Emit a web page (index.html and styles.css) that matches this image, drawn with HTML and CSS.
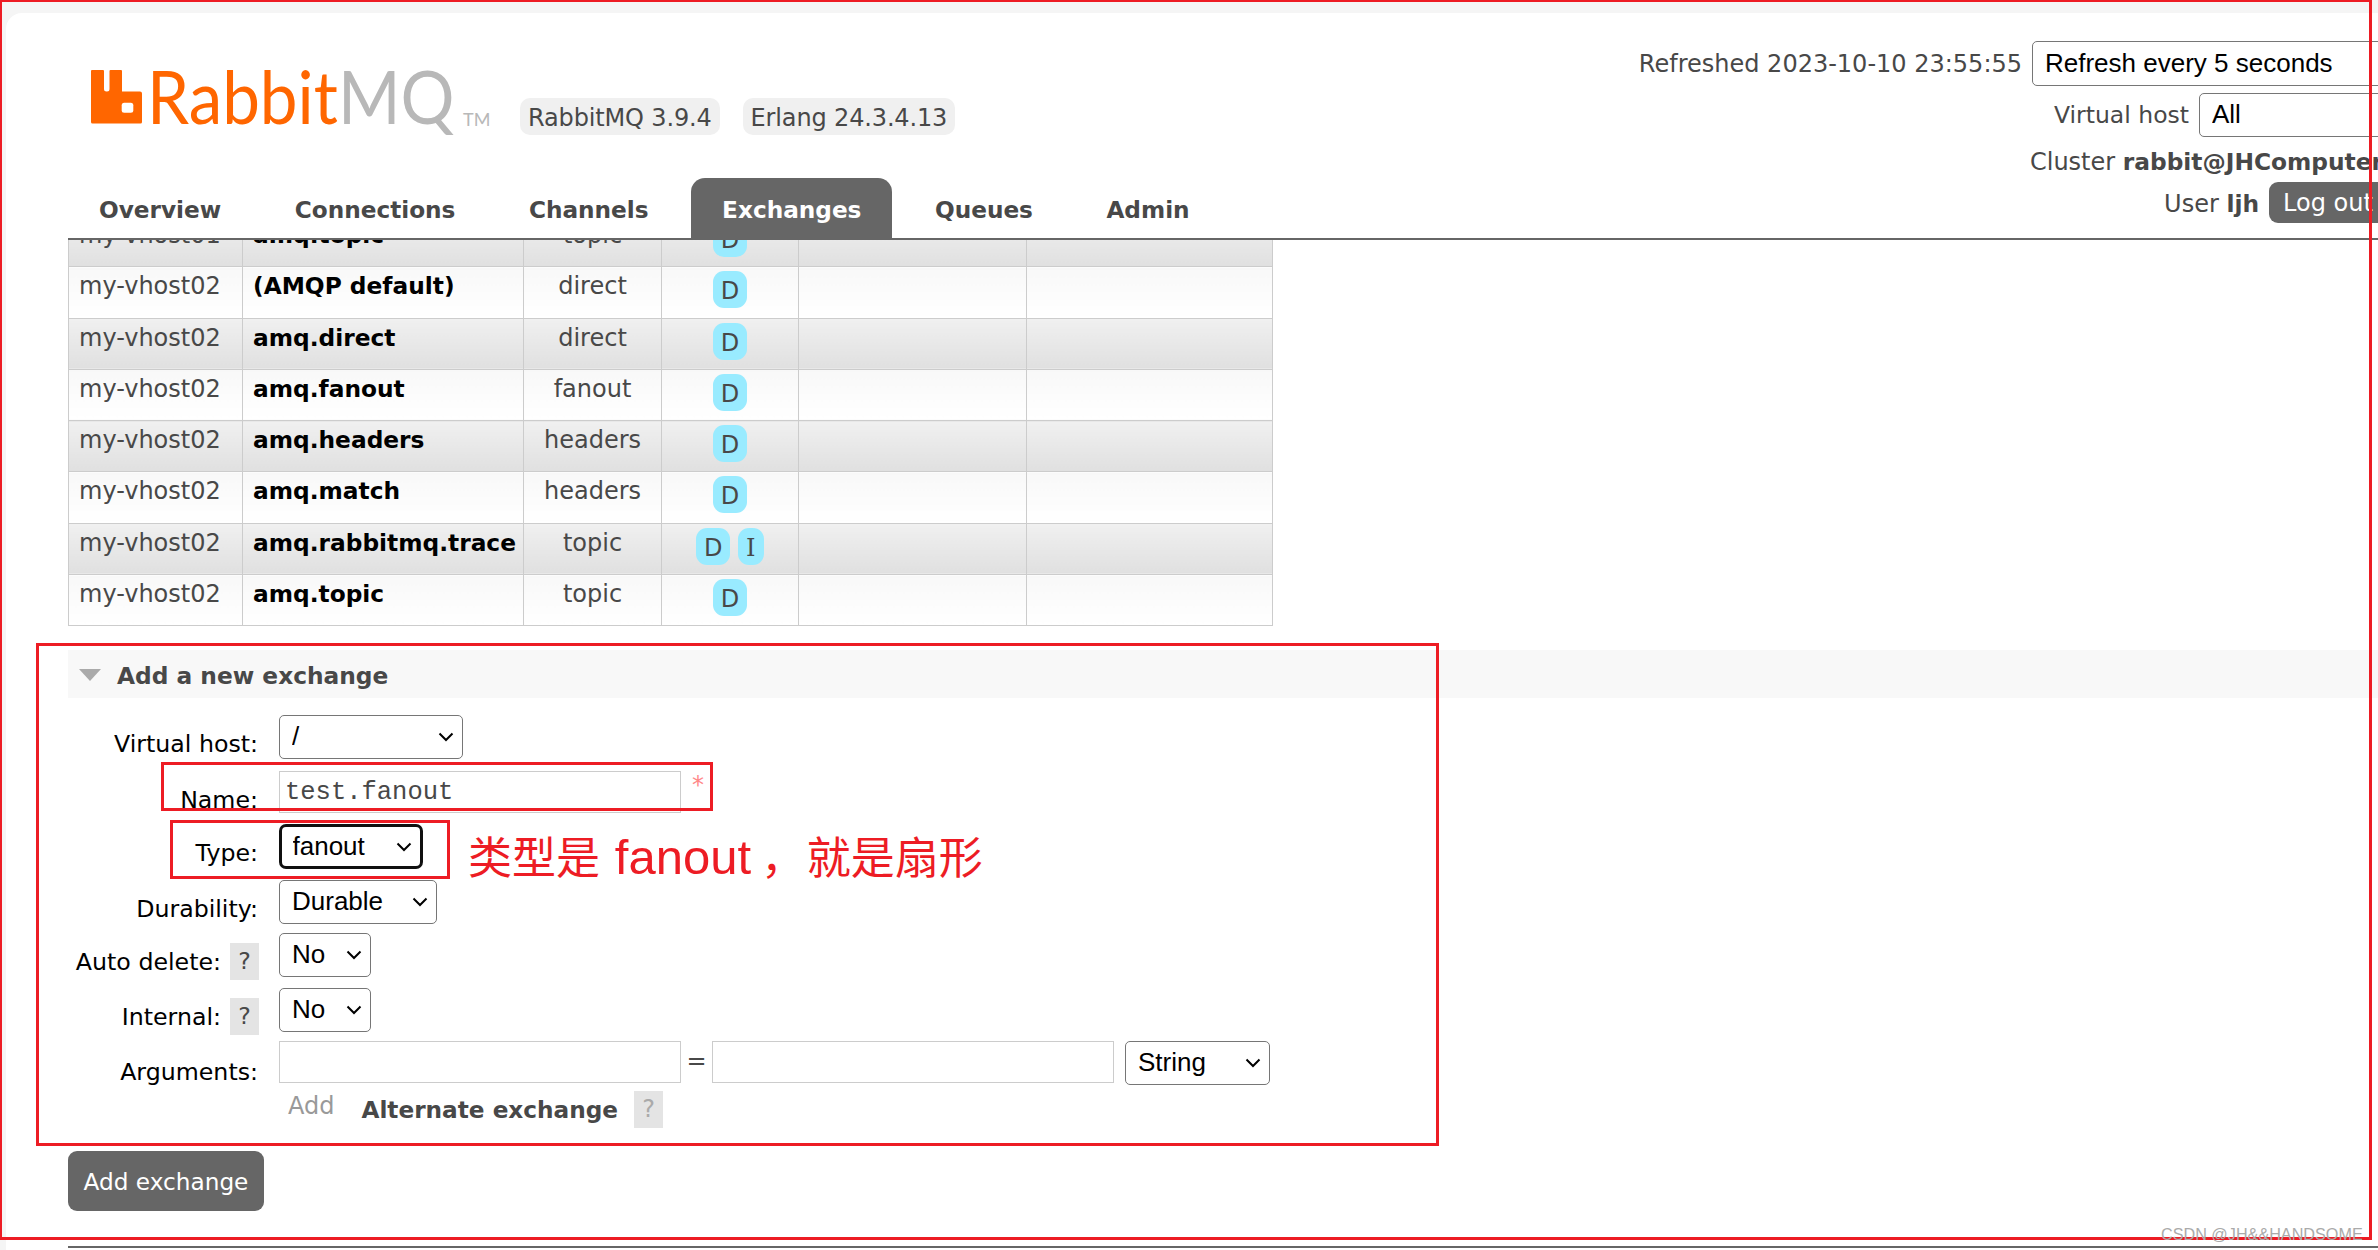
FILE: index.html
```html
<!doctype html>
<html lang="en">
  <head>
    <title>RabbitMQ Management</title>
    <link rel="stylesheet" href="styles.css">
  </head>
  <body>
    <div class="panel">
      <header class="top">
        <div class="brand-col">
          <div class="brand">
            <svg class="logo-icon" viewBox="0 0 51 54" width="51" height="54">
              <path fill="#ff6600" d="M1 0h11a1 1 0 0 1 1 1v18a2.500 2.500 0 0 0 2.500 2.500h.5a2.500 2.500 0 0 0 2.500-2.500V1a1 1 0 0 1 1-1h10.500a1 1 0 0 1 1 1v20.500h18a2 2 0 0 1 2 2V52a1.500 1.500 0 0 1-1.500 1.500H1.500A1.500 1.500 0 0 1 0 52V1a1 1 0 0 1 1-1z"/>
              <rect x="30.700" y="32.700" width="11.600" height="10" rx="2.500" fill="#fff"/>
            </svg>
            <span class="wordmark"><span class="rabbit">Rabbit</span><span class="mq">MQ</span></span>
            <span class="tm">TM</span>
            <span class="version">RabbitMQ 3.9.4</span>
            <span class="version">Erlang 24.3.4.13</span>
          </div>
          <nav class="menu">
            <a href="#">Overview</a>
            <a href="#">Connections</a>
            <a href="#">Channels</a>
            <a href="#" class="selected">Exchanges</a>
            <a href="#">Queues</a>
            <a href="#">Admin</a>
          </nav>
        </div>
        <div class="status">
          <div class="status-row">
            <span>Refreshed 2023-10-10 23:55:55</span>
            <select class="select refresh-select"><option>Refresh every 5 seconds</option></select>
          </div>
          <div class="status-row vhost-row">
            <span>Virtual host</span>
            <select class="select vhost-select"><option>All</option></select>
          </div>
          <div class="status-row cluster-row">Cluster <b>rabbit@JHComputer</b></div>
          <div class="status-row user-row">
            <span>User <b>ljh</b></span>
            <button class="logout" type="button">Log out</button>
          </div>
        </div>
      </header>

      <div class="list-clip">
        <table class="list">
          <tbody>
            <tr><td>my-vhost01</td><td class="name">amq.topic</td><td class="c">topic</td><td class="c"><span class="tag">D</span></td><td class="rate"></td><td></td></tr>
            <tr><td>my-vhost02</td><td class="name">(AMQP default)</td><td class="c">direct</td><td class="c"><span class="tag">D</span></td><td class="rate"></td><td></td></tr>
            <tr><td>my-vhost02</td><td class="name">amq.direct</td><td class="c">direct</td><td class="c"><span class="tag">D</span></td><td class="rate"></td><td></td></tr>
            <tr><td>my-vhost02</td><td class="name">amq.fanout</td><td class="c">fanout</td><td class="c"><span class="tag">D</span></td><td class="rate"></td><td></td></tr>
            <tr><td>my-vhost02</td><td class="name">amq.headers</td><td class="c">headers</td><td class="c"><span class="tag">D</span></td><td class="rate"></td><td></td></tr>
            <tr><td>my-vhost02</td><td class="name">amq.match</td><td class="c">headers</td><td class="c"><span class="tag">D</span></td><td class="rate"></td><td></td></tr>
            <tr><td>my-vhost02</td><td class="name">amq.rabbitmq.trace</td><td class="c">topic</td><td class="c"><span class="tag">D</span> <span class="tag tag-i">I</span></td><td class="rate"></td><td></td></tr>
            <tr><td>my-vhost02</td><td class="name">amq.topic</td><td class="c">topic</td><td class="c"><span class="tag">D</span></td><td class="rate"></td><td></td></tr>
          </tbody>
        </table>
      </div>

      <section class="section">
        <h2 class="section-title"><span class="triangle"></span>Add a new exchange</h2>
        <form class="form">
          <label class="form-label">Virtual host:</label>
          <div class="form-field"><select class="select vhost-field"><option>/</option></select></div>

          <label class="form-label">Name:</label>
          <div class="form-field"><input class="input mono" type="text" value="test.fanout"><span class="mand">*</span></div>

          <label class="form-label">Type:</label>
          <div class="form-field"><select class="select type-field focused"><option>fanout</option></select></div>

          <label class="form-label">Durability:</label>
          <div class="form-field"><select class="select durable-field"><option>Durable</option></select></div>

          <label class="form-label">Auto delete:<span class="help">?</span></label>
          <div class="form-field"><select class="select bool-field"><option>No</option></select></div>

          <label class="form-label">Internal:<span class="help">?</span></label>
          <div class="form-field"><select class="select bool-field"><option>No</option></select></div>

          <label class="form-label args-label">Arguments:</label>
          <div class="form-field">
            <input class="input" type="text">
            <span class="equals">=</span>
            <input class="input" type="text">
            <select class="select string-field"><option>String</option></select>
          </div>

          <div></div>
          <div class="form-field arg-links">
            <span class="add-link">Add</span>
            <b>Alternate exchange</b>
            <span class="help help-dim">?</span>
          </div>
        </form>
        <button class="add-button" type="button">Add exchange</button>
      </section>
      <div class="footer-rule"></div>
    </div>

    <!-- red markup drawn on top of the page -->
    <div class="mark mark-page"></div>
    <div class="mark mark-form"></div>
    <div class="mark mark-name"></div>
    <div class="mark mark-type"></div>
    <div class="note">类型是 <span class="note-latin">fanout</span> ，<span class="note-tail"> 就是扇形</span></div>
    <div class="watermark">CSDN @JH&amp;&amp;HANDSOME</div>
  </body>
</html>
```

FILE: styles.css
```css
html, body {
  margin: 0;
  padding: 0;
  height: 1250px;
  overflow: hidden;
  background: #f5f5f5;
}

body {
  position: relative;
  font-family: "DejaVu Sans", Verdana, sans-serif;
  font-size: 24px;
  color: #484848;
}

.panel {
  margin: 13px 0 0 6px;
  height: 1237px;
  padding-left: 62px;
  background: #fff;
  border-top-left-radius: 16px;
  box-sizing: border-box;
}

/* header */
.top {
  display: flex;
  justify-content: space-between;
  height: 227px;
  box-sizing: border-box;
  border-bottom: 2px solid #666;
}

.brand {
  display: flex;
  align-items: flex-start;
  height: 165px;
  padding: 57px 0 0 23px;
  box-sizing: border-box;
}

.logo-icon {
  flex: none;
}

.wordmark {
  font-family: Lato, "Open Sans", sans-serif;
  font-size: 74px;
  line-height: 54px;
  margin: -1px 0 0 5px;
  width: 303px;
  white-space: nowrap;
  display: inline-block;
  transform: scaleX(0.91);
  transform-origin: left center;
}

.rabbit { color: #ff6600; }
.mq { color: #b8b8b8; }

.tm {
  color: #b8b8b8;
  font-family: Lato, sans-serif;
  font-size: 18px;
  margin: 38px 0 0 13px;
  width: 57px;
}

.version {
  margin: 28px 23px 0 0;
  padding: 0 8px;
  height: 37px;
  line-height: 40px;
  background: #f0f0f0;
  border-radius: 10px;
  letter-spacing: -0.15px;
}

.menu {
  display: flex;
  gap: 11.5px;
  height: 61px;
}

.menu a {
  padding: 0 31px;
  line-height: 64px;
  font-weight: bold;
  font-size: 23.2px;
  color: #484848;
  text-decoration: none;
  border-radius: 14px 14px 0 0;
}

.menu a.selected {
  background: #666;
  color: #fff;
}

.status {
  display: flex;
  flex-direction: column;
  align-items: flex-end;
  margin-right: -40px;
  padding-top: 28px;
}

.status-row {
  display: flex;
  align-items: center;
  gap: 10px;
  color: #484848;
  white-space: nowrap;
}

.status-row b {
  font-size: 23.3px;
}

.vhost-row {
  margin-top: 7px;
  font-size: 23.5px;
}

.cluster-row {
  display: block;
  margin: 7px 35px 0 0;
  line-height: 36px;
}

.user-row {
  margin-top: 2px;
}

.user-row span {
  padding-top: 2px;
}

.logout {
  height: 41px;
  width: 149px;
  border: none;
  border-radius: 9px;
  background: #666;
  color: #fff;
  font: inherit;
  text-align: left;
  padding: 0 14px;
}

/* form controls */
.select {
  appearance: none;
  box-sizing: border-box;
  height: 44px;
  padding: 0 8px 2px 12px;
  border: 1.5px solid #767676;
  border-radius: 5px;
  color: #000;
  font-family: "Liberation Sans", Arial, sans-serif;
  font-size: 26px;
  background: #fff url("data:image/svg+xml,%3Csvg xmlns='http://www.w3.org/2000/svg' width='16' height='10'%3E%3Cpath d='M1.5 1.5 8 8l6.5-6.5' fill='none' stroke='%23000' stroke-width='2'/%3E%3C/svg%3E") no-repeat right 8px center;
}

.refresh-select { width: 386px; height: 45px; }
.vhost-select { width: 219px; }
.vhost-field { width: 184px; }
.type-field { width: 144px; height: 45px; }
.durable-field { width: 158px; }
.bool-field { width: 92px; }
.string-field { width: 145px; margin-left: 11px; }

.focused {
  border: 3px solid #101010;
  border-radius: 7px;
  padding-left: 10.5px;
}

.input {
  box-sizing: border-box;
  width: 402px;
  height: 42px;
  padding: 0 5px;
  border: 1.5px solid #ccc;
  border-radius: 0;
  background: #fff;
  color: #484848;
  font-size: 24px;
}

.mono {
  font-family: "Liberation Mono", "DejaVu Sans Mono", monospace;
  font-size: 25.5px;
}

/* exchange list, scrolled so the top row sits under the header */
.list-clip {
  overflow: hidden;
  width: 1206px;
}

.list {
  border-collapse: collapse;
  table-layout: fixed;
  width: 1205px;
  margin-top: -25px;
}

.list td {
  height: 51.3px;
  box-sizing: border-box;
  padding: 5px 10px 0;
  vertical-align: top;
  border: 1.5px solid #ccc;
  background: linear-gradient(#f8f8f8, #fff);
  white-space: nowrap;
}

.list td:nth-child(1) { width: 174px; }
.list td:nth-child(2) { width: 281px; }
.list td:nth-child(3) { width: 138px; }
.list td:nth-child(4) { width: 137px; }
.list td:nth-child(5) { width: 228px; }

.list tr:nth-child(odd) td {
  background: linear-gradient(#f0f0f0, #e0e0e0);
}

.list .name {
  font-weight: bold;
  font-size: 23.3px;
  color: #000;
}

.list .c {
  text-align: center;
}

.tag {
  display: inline-block;
  vertical-align: top;
  width: 34px;
  height: 37px;
  margin-top: -1px;
  line-height: 41px;
  border-radius: 11px;
  background: #99ebff;
  text-align: center;
}

.tag-i {
  width: 26px;
  font-family: "DejaVu Serif", serif;
  font-size: 24px;
}

/* add exchange */
.section {
  margin-top: 24px;
}

.section-title {
  display: flex;
  align-items: center;
  height: 48px;
  box-sizing: border-box;
  margin: 0;
  padding: 2px 0 0 11px;
  background: #f8f8f8;
  font-size: 23.3px;
  font-weight: bold;
  color: #484848;
}

.triangle {
  width: 0;
  height: 0;
  margin-right: 16px;
  border-left: 11px solid transparent;
  border-right: 11px solid transparent;
  border-top: 12px solid #aaa;
}

.form {
  display: grid;
  grid-template-columns: 190px 1fr;
  grid-template-rows: 56px 53px 56px 53px 55px 53px 45px 46px;
  column-gap: 21px;
  margin: 17px 0 0;
}

.form-label {
  display: flex;
  justify-content: flex-end;
  align-items: flex-start;
  padding-top: 15px;
  color: #000;
  font-size: 23.7px;
  white-space: nowrap;
}

.args-label {
  padding-top: 17px;
}

.form-field {
  display: flex;
  align-items: flex-start;
}

.mand {
  color: #f88;
  margin-left: 11px;
}

.equals {
  width: 31px;
  text-align: center;
  margin-top: 6px;
}

.help {
  width: 29px;
  height: 37px;
  line-height: 37px;
  margin-left: 9px;
  background: #e4e4e4;
  text-align: center;
  color: #484848;
}

.form-label .help {
  margin: -5px -1px 0 9px;
}

.help-dim {
  color: #aaa;
}

.arg-links {
  align-items: center;
}

.add-link {
  color: #999;
  margin: 0 0 6px 9px;
}

.arg-links b {
  font-size: 23.2px;
  color: #484848;
  margin-left: 27px;
}

.arg-links .help {
  margin-left: 16px;
}

.add-button {
  display: block;
  width: 196px;
  height: 60px;
  margin-top: 19px;
  border: none;
  border-radius: 9px;
  background: #666;
  color: #fff;
  font: inherit;
  font-size: 23.2px;
}

.footer-rule {
  margin-top: 35px;
  border-top: 2px solid #666;
}

/* red markup */
.mark {
  position: absolute;
  box-sizing: border-box;
  border: 3px solid #ed1c24;
}

.mark-page { left: 0; top: 0; width: 2372px; height: 1240px; border-width: 2px 3px 3px 2px; }
.mark-form { left: 36px; top: 643px; width: 1403px; height: 503px; }
.mark-name { left: 161px; top: 762px; width: 552px; height: 49px; }
.mark-type { left: 170px; top: 820px; width: 280px; height: 59px; }

.note {
  position: absolute;
  left: 468px;
  top: 825px;
  color: #ed1c24;
  font-family: "Noto Sans CJK SC", sans-serif;
  font-size: 44px;
  line-height: 60px;
  white-space: pre;
}

.note-latin {
  margin-left: 5px;
  font-family: "Liberation Sans", Arial, sans-serif;
  font-size: 49px;
}

.note-tail {
  margin-left: -8px;
}

.watermark {
  position: absolute;
  left: 2161px;
  top: 1225px;
  color: #aaa;
  font-family: "Liberation Sans", Arial, sans-serif;
  font-size: 16.2px;
  white-space: nowrap;
}
```
